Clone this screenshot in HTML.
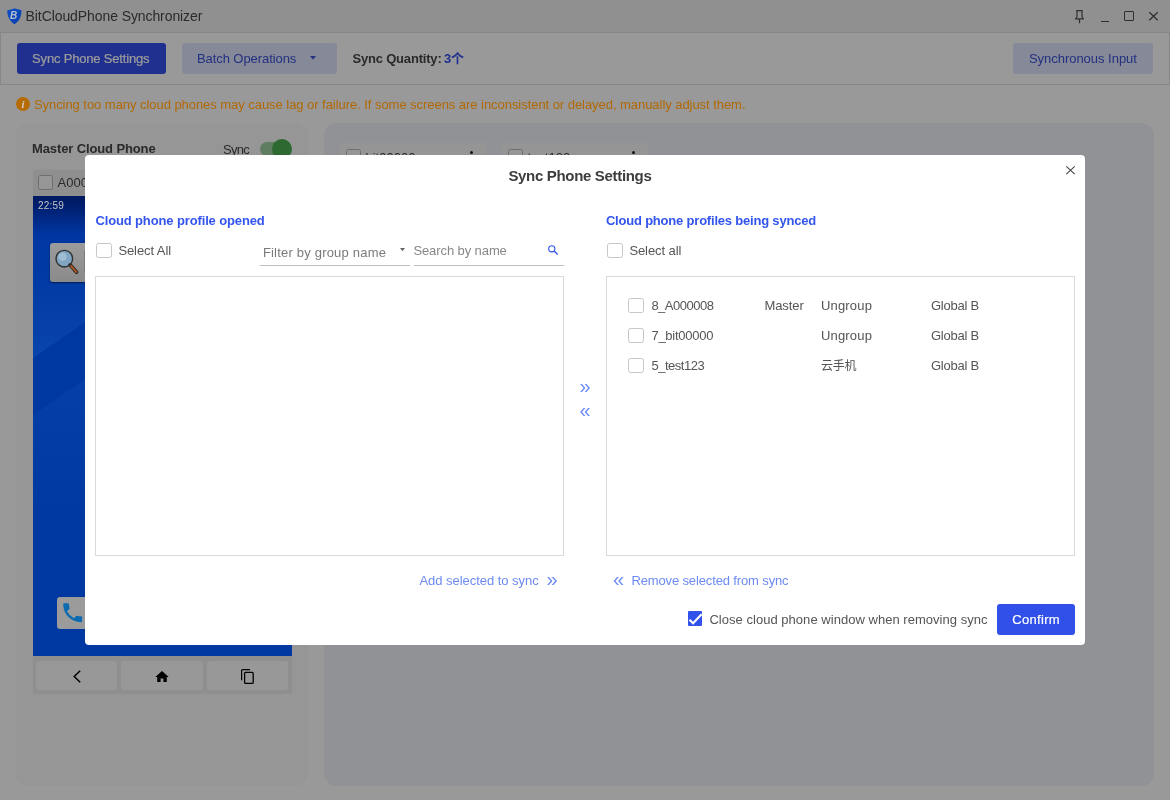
<!DOCTYPE html>
<html lang="en">
<head>
<meta charset="utf-8">
<title>BitCloudPhone Synchronizer</title>
<style>
*{box-sizing:border-box;margin:0;padding:0}
html,body{width:1170px;height:800px;overflow:hidden;background:#fff}
body{font-family:"Liberation Sans","Noto Sans CJK SC",sans-serif;font-size:13px;color:#333;position:relative}
.abs{position:absolute}
#app,#top,#mc{will-change:transform}
.t{position:absolute;white-space:nowrap;line-height:20px;height:20px}
#app{position:absolute;left:0;top:0;width:1170px;height:800px;background:#fff;overflow:hidden}
#titlebar{left:0;top:0;width:1170px;height:32px;background:#f0f0f0}
#toolbar{left:0;top:32px;width:1170px;height:53px;background:#fff;border:1px solid #e2e2e2}
.btn{position:absolute;border-radius:3px;height:31px;top:43px}
#overlay{left:0;top:0;width:1170px;height:800px;background:rgba(0,0,0,0.4)}
#top{left:0;top:0;width:1170px;height:800px;overflow:hidden}
#modal{left:85px;top:155px;width:1000px;height:490px;background:#fff;border-radius:4px}
.cb{position:absolute;width:15.5px;height:15px;border:1px solid #c6c6c6;border-radius:2.5px;background:#fff}
.cbg{position:absolute;width:15.5px;height:15px;border:1px solid #b8b8b8;border-radius:2.5px;background:#fafafa}
.box{position:absolute;border:1px solid #dadada;background:#fff}
.ul{position:absolute;height:1px;background:#bdbdbd}
svg{position:absolute;overflow:visible}
</style>
</head>
<body>
<div id="app">
  <div id="titlebar" class="abs"></div>
  <div id="toolbar" class="abs"></div>
  <div class="btn" style="left:17px;width:149px;background:#3450ee"></div>
  <div class="btn" style="left:182px;width:155px;background:#e0e5fc"></div>
  <svg style="left:310px;top:56px" width="6" height="4" viewBox="0 0 6 4"><path d="M0 0H6L3 3.4Z" fill="#3a52d6"/></svg>
  <div class="btn" style="left:1013px;width:140px;background:#e0e5fc"></div>
  <!-- left panel -->
  <div class="abs" style="left:16px;top:123px;width:292px;height:663px;border-radius:13px;background:#fafafa"></div>
  <!-- right panel -->
  <div class="abs" style="left:324px;top:123px;width:830px;height:663px;border-radius:13px;background:#f1f3fb"></div>
  <!-- toggle -->
  <div class="abs" style="left:260px;top:141.5px;width:31px;height:14px;border-radius:7px;background:#9fd0a1"></div>
  <div class="abs" style="left:272px;top:138.5px;width:20px;height:20px;border-radius:10px;background:#4caf50"></div>
  <!-- master card header -->
  <div class="abs" style="left:33px;top:170px;width:259px;height:26px;background:#efefef"></div>
  <div class="cbg" style="left:37.5px;top:174.5px"></div>
  <div class="t" style="left:57.5px;top:172.6px;color:#464646">A000008</div>
  <!-- nav bar -->
  <div class="abs" style="left:33px;top:656px;width:259px;height:37.5px;background:#efefef"></div>
  <div class="abs" style="left:36px;top:661px;width:81px;height:29px;border-radius:3px;background:#fdfdfd"></div>
  <div class="abs" style="left:121px;top:661px;width:82px;height:29px;border-radius:3px;background:#fdfdfd"></div>
  <div class="abs" style="left:207px;top:661px;width:81px;height:29px;border-radius:3px;background:#fdfdfd"></div>
  <svg style="left:73px;top:670px" width="8" height="13" viewBox="0 0 8 13"><path d="M7.2 0.7L1.2 6.5L7.2 12.3" fill="none" stroke="#000" stroke-width="1.5"/></svg>
  <svg style="left:155px;top:670.5px" width="14" height="11" viewBox="0 0 14 11"><path d="M7 0L0.3 6H2.2V11H5.6V7.4H8.4V11H11.8V6H13.7Z" fill="#000"/></svg>
  <svg style="left:240.5px;top:668.5px" width="13" height="15" viewBox="0 0 13 15"><path d="M9 0.6H1.6Q0.6 0.6 0.6 1.6V11.2" fill="none" stroke="#000" stroke-width="1.2"/><rect x="3.6" y="3.4" width="8.6" height="11" rx="1" fill="none" stroke="#000" stroke-width="1.3"/></svg>
  <!-- sync cards headers -->
  <div class="abs" style="left:340px;top:143px;width:146px;height:26px;background:#f8f8f8"></div>
  <div class="abs" style="left:502px;top:143px;width:146px;height:26px;background:#f8f8f8"></div>
  <div class="cbg" style="left:345.5px;top:149px"></div>
  <div class="cbg" style="left:507.5px;top:149px"></div>
  <div class="t" style="left:365.5px;top:148px;color:#464646">bit00000</div>
  <div class="t" style="left:527.5px;top:148px;color:#464646">test123</div>
  <div class="abs" style="left:470px;top:151px;width:3px;height:3px;border-radius:2px;background:#222"></div>
  <div class="abs" style="left:632px;top:151px;width:3px;height:3px;border-radius:2px;background:#222"></div>
<div class="t" id="t1" style="left:25.60px;top:6.37px;font-size:14px;font-weight:normal;color:#484848;letter-spacing:-0.088px;">BitCloudPhone Synchronizer</div>
<div class="t" id="t2" style="left:32.10px;top:49.00px;font-size:13px;font-weight:normal;color:#ffffff;letter-spacing:-0.184px;-webkit-text-stroke:0.2px #fff;">Sync Phone Settings</div>
<div class="t" id="t3" style="left:196.90px;top:49.00px;font-size:13px;font-weight:normal;color:#3a52d6;letter-spacing:-0.067px;">Batch Operations</div>
<div class="t" id="t4" style="left:352.40px;top:49.00px;font-size:13px;font-weight:bold;color:#464646;letter-spacing:-0.184px;">Sync Quantity:</div>
<div class="t" id="t4b" style="left:443.90px;top:49.00px;font-size:13px;font-weight:bold;color:#3450ee;letter-spacing:0.000px;">3个</div>
<div class="t" id="t5" style="left:1028.90px;top:48.80px;font-size:13px;font-weight:normal;color:#3a52d6;letter-spacing:-0.024px;">Synchronous Input</div>
<div class="t" id="t7" style="left:32.00px;top:139.00px;font-size:13px;font-weight:bold;color:#464646;letter-spacing:-0.118px;">Master Cloud Phone</div>
<div class="t" id="t8" style="left:222.90px;top:139.50px;font-size:13px;font-weight:normal;color:#464646;letter-spacing:-0.667px;">Sync</div>
</div>
<div id="overlay" class="abs"></div>
<div id="top" class="abs">
  <!-- warning icon -->
  <svg style="left:16px;top:96.9px" width="14" height="14" viewBox="0 0 14 14"><circle cx="7" cy="7" r="7" fill="#b66c02"/><text x="7" y="11" font-size="10.5" font-weight="bold" font-style="italic" font-family="Liberation Serif, serif" text-anchor="middle" fill="#cfcfcf">i</text></svg>

  <!-- title bar logo -->
  <svg style="left:6.600px;top:7.700px" width="15" height="16.500" viewBox="0 0 15 16.500"><defs><linearGradient id="lg" x1="0" y1="0" x2="1" y2="1"><stop offset="0" stop-color="#0c50c4"/><stop offset="1" stop-color="#0a3fae"/></linearGradient></defs><path d="M0.300 2.300C2.600 2.200 5 1.300 7.300 0.300C9.600 1.200 11.900 1.800 14.400 1.900C14.700 8 12.600 12.800 7.400 16.300C2.600 13 0.100 8.400 0.300 2.300Z" fill="url(#lg)"/><text x="3" y="11.300" font-size="10" font-weight="bold" font-style="italic" font-family="Liberation Sans, sans-serif" fill="#b4bed2">B</text></svg>
  <!-- window controls -->
  <svg style="left:1075.3px;top:9.5px" width="9" height="14" viewBox="0 0 9 14"><path d="M1.3 0.6H7.7M2 0.6V7M7 0.6V7M2 7L0.6 8.9H8.4L7 7M4.5 8.9V13.3" fill="none" stroke="#2e2e2e" stroke-width="1.2" stroke-linejoin="round"/></svg>
  <div class="abs" style="left:1100.5px;top:20.8px;width:8px;height:1.2px;background:#2e2e2e"></div>
  <div class="abs" style="left:1123.5px;top:10.8px;width:10.5px;height:10.2px;border:1.2px solid #2e2e2e;border-radius:1px"></div>
  <svg style="left:1148.5px;top:11.8px" width="9" height="8.6" viewBox="0 0 9 8.6"><path d="M0.3 0.3L8.7 8.3M8.7 0.3L0.3 8.3" stroke="#2e2e2e" stroke-width="1.2"/></svg>
  <!-- phone screen -->
  <div class="abs" id="screen" style="left:33px;top:196px;width:259px;height:460px;background:linear-gradient(180deg,#001a62 0px,#001e6e 10px,#002a88 24px,#0035a0 38px,#0039a4 55px,#0038a1 120px,#0038a1 100%);overflow:hidden">
    <svg style="left:0;top:0" width="259" height="460" viewBox="0 0 259 460"><defs><linearGradient id="g1" gradientUnits="userSpaceOnUse" x1="0" y1="70" x2="0" y2="165"><stop offset="0" stop-color="#1a5cc0" stop-opacity="0"/><stop offset="1" stop-color="#1a5cc0" stop-opacity="0.38"/></linearGradient><linearGradient id="g2" gradientUnits="userSpaceOnUse" x1="0" y1="180" x2="0" y2="330"><stop offset="0" stop-color="#1a5cc0" stop-opacity="0.2"/><stop offset="1" stop-color="#1a5cc0" stop-opacity="0"/></linearGradient></defs><path d="M0 70H259V-17L0 162Z" fill="url(#g1)"/><path d="M0 219L259 40V460H0Z" fill="url(#g2)"/></svg>
    <!-- search widget -->
    <div class="abs" style="left:17px;top:47px;width:200px;height:39px;border-radius:3px;background:linear-gradient(180deg,#9c9c9c,#8a8a8a);box-shadow:0 1px 2px rgba(0,0,0,0.5)"></div>
    <svg style="left:21px;top:52px" width="28" height="30" viewBox="0 0 28 30"><circle cx="10.3" cy="10.7" r="8.3" fill="#7fa5c2" stroke="#303030" stroke-width="1.4"/><circle cx="8.6" cy="8.8" r="4.2" fill="#a3c1d6" opacity="0.85"/><path d="M16.2 17L22.6 24.2" stroke="#2a2a2a" stroke-width="3.8" stroke-linecap="round"/><path d="M17 18L22.5 24.1" stroke="#a8541f" stroke-width="2" stroke-linecap="round"/></svg>
    <div class="abs" style="left:51px;top:54px;width:1px;height:23px;background:#7c7c7c"></div>
    <!-- phone icon -->
    <div class="abs" style="left:24px;top:401px;width:33px;height:32px;border-radius:3px;background:#9b9b9b"></div>
    <svg style="left:27.1px;top:403.8px" width="25.3" height="25.3" viewBox="0 0 24 24"><path d="M6.62 10.79a15.05 15.05 0 0 0 6.59 6.59l2.2-2.2a1 1 0 0 1 1.02-.24c1.12.37 2.33.57 3.57.57.55 0 1 .45 1 1V20c0 .55-.45 1-1 1C10.61 21 3 13.39 3 4c0-.55.45-1 1-1h3.500c.55 0 1 .45 1 1 0 1.250.2 2.450.57 3.570.11.350.03.740-.25 1.020l-2.200 2.200z" fill="#0b6bb0"/></svg>
  </div>
<div class="t" id="t6" style="left:33.90px;top:94.70px;font-size:13px;font-weight:normal;color:#b26904;letter-spacing:-0.049px;">Syncing too many cloud phones may cause lag or failure. If some screens are inconsistent or delayed, manually adjust them.</div>
<div class="t" id="t10" style="left:37.90px;top:195.89px;font-size:10px;font-weight:normal;color:#c6c6c6;letter-spacing:0.250px;">22:59</div>
</div>
<div id="modal" class="abs"></div>
<div id="mc" class="abs" style="left:0;top:0;width:1170px;height:800px">
  <!-- close x -->
  <svg style="left:1066px;top:165.8px" width="9" height="8.4" viewBox="0 0 9 8.4"><path d="M0.3 0.3L8.7 8.1M8.7 0.3L0.3 8.1" stroke="#444" stroke-width="1.1"/></svg>
  <div class="cb" style="left:96px;top:243.3px"></div>
  <div class="cb" style="left:607.2px;top:243.3px"></div>
  <div class="ul" style="left:260px;top:264.8px;width:150px"></div>
  <div class="ul" style="left:414px;top:264.8px;width:150px"></div>
  <svg style="left:400.3px;top:248.4px" width="5" height="3.4" viewBox="0 0 5 3.4"><path d="M0 0H5L2.500 3.200Z" fill="#666"/></svg>
  <svg style="left:548.200px;top:245px" width="10.500" height="10" viewBox="0 0 10.500 10"><circle cx="3.800" cy="3.800" r="3.100" fill="none" stroke="#3355ee" stroke-width="1.150"/><path d="M6.100 6.100L9.700 9.600" stroke="#3355ee" stroke-width="1.350"/></svg>
  <div class="box" style="left:95px;top:276px;width:469px;height:280px"></div>
  <div class="box" style="left:606px;top:276px;width:469px;height:280px"></div>
  <div class="cb" style="left:628.2px;top:298.200px"></div>
  <div class="cb" style="left:628.2px;top:328.200px"></div>
  <div class="cb" style="left:628.2px;top:358.200px"></div>
  <!-- checked checkbox -->
  <div class="abs" style="left:687.700px;top:611.300px;width:14.700px;height:14.800px;border-radius:1px;background:#3152ea"></div>
  <svg style="left:687.700px;top:611.300px" width="14.700" height="14.800" viewBox="0 0 14.700 14.800"><path d="M1.500 8.800L5.100 12.300L13.600 3.300" fill="none" stroke="#fff" stroke-width="2"/></svg>
  <!-- confirm -->
  <div class="abs" style="left:997px;top:604px;width:78px;height:31px;border-radius:3px;background:#3150ea"></div>
<div class="t" id="t12" style="left:508.40px;top:166.04px;font-size:15px;font-weight:bold;color:#3d3d3d;letter-spacing:-0.322px;">Sync Phone Settings</div>
<div class="t" id="t13" style="left:95.40px;top:210.60px;font-size:13px;font-weight:bold;color:#3355ee;letter-spacing:-0.128px;">Cloud phone profile opened</div>
<div class="t" id="t14" style="left:118.40px;top:241.20px;font-size:13px;font-weight:normal;color:#555;letter-spacing:-0.088px;">Select All</div>
<div class="t" id="t15" style="left:262.90px;top:243.00px;font-size:13px;font-weight:normal;color:#7a7a7a;letter-spacing:0.200px;">Filter by group name</div>
<div class="t" id="t16" style="left:413.40px;top:240.60px;font-size:13px;font-weight:normal;color:#888;letter-spacing:-0.093px;">Search by name</div>
<div class="t" id="t17" style="left:605.90px;top:210.60px;font-size:13px;font-weight:bold;color:#3355ee;letter-spacing:-0.200px;">Cloud phone profiles being synced</div>
<div class="t" id="t18" style="left:629.40px;top:241.20px;font-size:13px;font-weight:normal;color:#555;letter-spacing:-0.088px;">Select all</div>
<div class="t" id="r1a" style="left:651.40px;top:295.70px;font-size:13px;font-weight:normal;color:#555;letter-spacing:-0.500px;">8_A000008</div>
<div class="t" id="r1b" style="left:764.40px;top:295.70px;font-size:13px;font-weight:normal;color:#555;letter-spacing:-0.080px;">Master</div>
<div class="t" id="r1c" style="left:820.90px;top:295.70px;font-size:13px;font-weight:normal;color:#555;letter-spacing:0.199px;">Ungroup</div>
<div class="t" id="r1d" style="left:930.90px;top:295.70px;font-size:13px;font-weight:normal;color:#555;letter-spacing:-0.229px;">Global B</div>
<div class="t" id="r2a" style="left:651.40px;top:325.70px;font-size:13px;font-weight:normal;color:#555;letter-spacing:-0.243px;">7_bit00000</div>
<div class="t" id="r2c" style="left:820.90px;top:325.70px;font-size:13px;font-weight:normal;color:#555;letter-spacing:0.199px;">Ungroup</div>
<div class="t" id="r2d" style="left:930.90px;top:325.70px;font-size:13px;font-weight:normal;color:#555;letter-spacing:-0.229px;">Global B</div>
<div class="t" id="r3a" style="left:651.40px;top:355.70px;font-size:13px;font-weight:normal;color:#555;letter-spacing:-0.475px;">5_test123</div>
<div class="t" id="r3c" style="left:820.90px;top:356.03px;font-size:12px;font-weight:normal;color:#555;letter-spacing:-0.200px;">云手机</div>
<div class="t" id="r3d" style="left:930.90px;top:355.70px;font-size:13px;font-weight:normal;color:#555;letter-spacing:-0.229px;">Global B</div>
<div class="t" id="t19" style="left:419.40px;top:570.70px;font-size:13px;font-weight:normal;color:#6d8bf2;letter-spacing:-0.031px;">Add selected to sync</div>
<div class="t" id="t19b" style="left:546.40px;top:568.69px;font-size:20px;font-weight:normal;color:#6d8bf2;letter-spacing:0.000px;">»</div>
<div class="t" id="t23" style="left:579.40px;top:375.69px;font-size:20px;font-weight:normal;color:#6d8bf2;letter-spacing:0.000px;">»</div>
<div class="t" id="t24" style="left:579.40px;top:400.39px;font-size:20px;font-weight:normal;color:#6d8bf2;letter-spacing:0.000px;">«</div>
<div class="t" id="t20b" style="left:612.90px;top:568.69px;font-size:20px;font-weight:normal;color:#6d8bf2;letter-spacing:0.000px;">«</div>
<div class="t" id="t20" style="left:631.40px;top:570.70px;font-size:13px;font-weight:normal;color:#6d8bf2;letter-spacing:-0.133px;">Remove selected from sync</div>
<div class="t" id="t21" style="left:709.40px;top:609.90px;font-size:13px;font-weight:normal;color:#555;letter-spacing:0.033px;">Close cloud phone window when removing sync</div>
<div class="t" id="t22" style="left:1012.30px;top:609.70px;font-size:13px;font-weight:normal;color:#ffffff;letter-spacing:0.316px;-webkit-text-stroke:0.2px #fff;">Confirm</div>
</div>
</body>
</html>
